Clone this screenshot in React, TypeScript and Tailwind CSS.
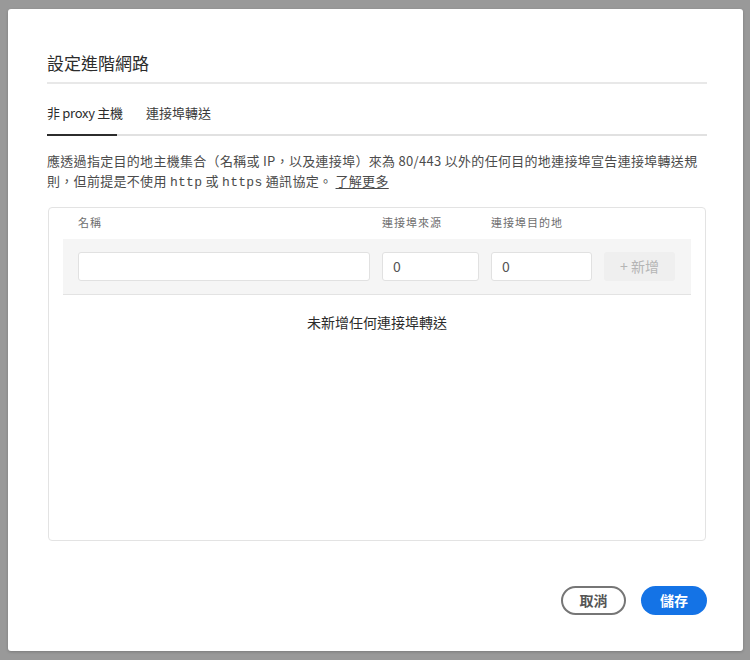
import React from "react";

const cjk = { fontFamily: '"Noto Sans CJK TC", "Noto Sans", sans-serif' };
const mono = { fontFamily: '"Liberation Mono", "Noto Sans CJK TC", monospace' };

export default function App() {
  return (
    <div className="w-[750px] h-[660px] bg-[#999999] pt-[9px] pl-[8px]" style={cjk}>
      <div className="w-[735px] h-[642px] bg-white rounded-[3px] pl-[39px] pr-[36px] pt-[42px] flex flex-col shadow-[0_1px_3px_rgba(0,0,0,0.2)]">
        <div className="text-[17px] leading-[24px] text-[#2c2c2c]">設定進階網路</div>
        <div className="mt-[7px] h-[2px] bg-[#e8e8e8]" />

        <div className="mt-[19px] flex flex-col">
          <div className="flex gap-[29px] text-[13px] leading-[20px]">
            <div className="w-[70px] pb-[11px] border-b-2 border-[#2c2c2c] text-[#2c2c2c] whitespace-nowrap tracking-[-0.3px] -mb-[2px] relative z-10">
              非 proxy 主機
            </div>
            <div className="pb-[11px] text-[#3a3a3a] whitespace-nowrap">連接埠轉送</div>
          </div>
          <div className="h-[2px] bg-[#e1e1e1]" />
        </div>

        <div className="mt-[15px] text-[13px] leading-[20px] text-[#4b4b4b] whitespace-nowrap tracking-[0.3px]">
          應透過指定目的地主機集合（名稱或 IP，以及連接埠）來為 80/443 以外的任何目的地連接埠宣告連接埠轉送規
          <br />
          則，但前提是不使用 <span style={mono}>http</span> 或 <span style={mono}>https</span> 通訊協定。{" "}
          <span className="underline underline-offset-2">了解更多</span>
        </div>

        <div className="mt-[14px] mx-[1px] h-[334px] border border-[#e3e3e3] rounded-[4px] px-[14px] flex flex-col">
          <div className="grid grid-cols-[292px_97px_101px_71px] gap-x-[12px] px-[15px] h-[31px] pt-[6px] text-[11px] leading-[16px] tracking-[1px] text-[#6e6e6e]">
            <div>名稱</div>
            <div>連接埠來源</div>
            <div>連接埠目的地</div>
            <div />
          </div>
          <div className="bg-[#f5f5f5] border-b border-[#e3e3e3] grid grid-cols-[292px_97px_101px_71px] gap-x-[12px] px-[15px] pt-[13px] pb-[13px]">
            <div className="h-[29px] bg-white border border-[#e1e1e1] rounded-[3px]" />
            <div className="h-[29px] bg-white border border-[#e1e1e1] rounded-[3px] pl-[10px] flex items-center text-[14px] text-[#555]">0</div>
            <div className="h-[29px] bg-white border border-[#e1e1e1] rounded-[3px] pl-[10px] flex items-center text-[14px] text-[#555]">0</div>
            <div className="h-[29px] bg-[#efefef] rounded-[3px] flex items-center justify-center text-[14px] text-[#b5b5b5]">
              + 新增
            </div>
          </div>
          <div className="mt-[17px] text-center text-[14px] leading-[20px] text-[#2c2c2c]">未新增任何連接埠轉送</div>
        </div>

        <div className="mt-[45px] flex justify-end gap-[15px]">
          <button className="w-[65px] h-[29px] rounded-full border-2 border-[#767676] text-[14px] font-bold text-[#555] flex items-center justify-center">
            取消
          </button>
          <button className="w-[66px] h-[29px] rounded-full bg-[#1473e6] text-[14px] font-bold text-white flex items-center justify-center">
            儲存
          </button>
        </div>
      </div>
    </div>
  );
}
